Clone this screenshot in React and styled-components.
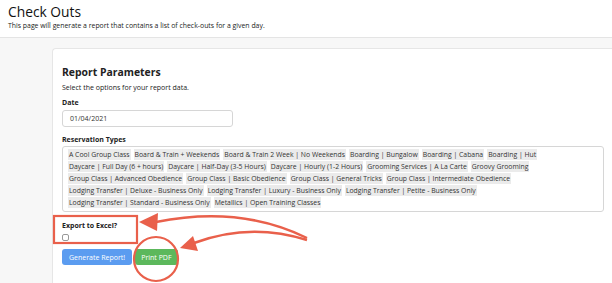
import styled, { createGlobalStyle } from 'styled-components';

const GlobalStyle = createGlobalStyle`
    html, body {
        margin: 0;
        padding: 0;
    }
    body {
        font-family: "Open Sans", "Liberation Sans", sans-serif;
        background: #f7f7f7;
        color: #222;
        width: 612px;
        height: 283px;
        overflow: hidden;
        position: relative;
    }
`;

const Header = styled.header`
    background: #fff;
    height: 38px;
    box-sizing: border-box;
    padding: 3px 8px 0;
    border-bottom: 1px solid #e4e4e4;
`;

const Title = styled.h1`
    margin: 0;
    font-size: 13.8px;
    font-weight: 400;
    line-height: 18px;
    color: #111;
`;

const Subtitle = styled.p`
    margin: 0;
    font-size: 6.9px;
    line-height: 9px;
    color: #222;
`;

const Main = styled.main`
    padding: 10px 0 0 52px;
`;

const Card = styled.section`
    background: #fff;
    border: 1px solid #e6e6e6;
    border-right: none;
    border-radius: 4px 0 0 4px;
    padding: 16px 0 20px 9px;
    width: 600px;
    box-sizing: border-box;
`;

const CardTitle = styled.h2`
    margin: 0;
    font-size: 10.4px;
    font-weight: 700;
    line-height: 14px;
    color: #222;
`;

const Hint = styled.p`
    margin: 4px 0 0;
    font-size: 7px;
    line-height: 10px;
`;

const Label = styled.label`
    display: block;
    font-size: 7px;
    font-weight: 700;
    line-height: 10px;
    margin-top: ${(p) => p.$top || 0}px;
`;

const DateInput = styled.div`
    margin-top: 2px;
    width: 171px;
    height: 17px;
    box-sizing: border-box;
    border: 1px solid #d6d6d6;
    border-radius: 3px;
    padding: 0 7px;
    font-size: 7px;
    line-height: 15px;
    color: #333;
`;

const TagBox = styled.div`
    margin-top: 1px;
    width: 542px;
    height: 66px;
    box-sizing: border-box;
    border: 1px solid #d6d6d6;
    border-radius: 3px;
    padding: 2px 5px;
    display: flex;
    flex-wrap: wrap;
    align-content: flex-start;
    gap: 1px 3px;
`;

const Tag = styled.span`
    background: #ebebeb;
    font-size: 6.85px;
    line-height: 11px;
    padding: 0 1px;
    color: #333;
    white-space: nowrap;
`;

const ExportBlock = styled.div`
    margin-top: 9px;
`;

const Checkbox = styled.span`
    display: block;
    margin-top: 3px;
    width: 5px;
    height: 5px;
    border: 1px solid #999;
    border-radius: 2px;
`;

const Buttons = styled.div`
    display: flex;
    gap: 3px;
    margin-top: 8px;
`;

const Button = styled.button`
    font-family: inherit;
    font-size: 7px;
    height: 16px;
    padding: 0 ${(p) => p.$pad}px;
    border: none;
    border-radius: 3px;
    color: #fff;
    background: ${(p) => p.$bg};
`;

const Overlay = styled.svg`
    position: absolute;
    left: 0;
    top: 0;
    pointer-events: none;
`;

const types = [
    'A Cool Group Class',
    'Board & Train + Weekends',
    'Board & Train 2 Week | No Weekends',
    'Boarding | Bungalow',
    'Boarding | Cabana',
    'Boarding | Hut',
    'Daycare | Full Day (6 + hours)',
    'Daycare | Half-Day (3-5 Hours)',
    'Daycare | Hourly (1-2 Hours)',
    'Grooming Services | A La Carte',
    'Groovy Grooming',
    'Group Class | Advanced Obedience',
    'Group Class | Basic Obedience',
    'Group Class | General Tricks',
    'Group Class | Intermediate Obedience',
    'Lodging Transfer | Deluxe - Business Only',
    'Lodging Transfer | Luxury - Business Only',
    'Lodging Transfer | Petite - Business Only',
    'Lodging Transfer | Standard - Business Only',
    'Metallics | Open Training Classes',
];

export default function App() {
    return (
        <>
            <GlobalStyle />
            <Header>
                <Title>Check Outs</Title>
                <Subtitle>This page will generate a report that contains a list of check-outs for a given day.</Subtitle>
            </Header>
            <Main>
                <Card>
                    <CardTitle>Report Parameters</CardTitle>
                    <Hint>Select the options for your report data.</Hint>
                    <Label $top={5}>Date</Label>
                    <DateInput>01/04/2021</DateInput>
                    <Label $top={8}>Reservation Types</Label>
                    <TagBox>
                        {types.map((t) => (
                            <Tag key={t}>{t}</Tag>
                        ))}
                    </TagBox>
                    <ExportBlock>
                        <Label>Export to Excel?</Label>
                        <Checkbox />
                    </ExportBlock>
                    <Buttons>
                        <Button $bg="#5b9cf0" $pad={7}>Generate Report!</Button>
                        <Button $bg="#5cb85c" $pad={6}>Print PDF</Button>
                    </Buttons>
                </Card>
            </Main>
            <Overlay width="612" height="283" viewBox="0 0 612 283">
                <rect x="54" y="216" width="83" height="27" fill="none" stroke="#e9604b" strokeWidth="2.2" />
                <circle cx="156" cy="259" r="22" fill="none" stroke="#e9604b" strokeWidth="2.2" />
                <path d="M307 238 Q 240 205 156 222" fill="none" stroke="#e9604b" strokeWidth="2.5" />
                <polygon points="139,222 158,213 157,231" fill="#e9604b" />
                <path d="M307 240 Q 250 222 194 243" fill="none" stroke="#e9604b" strokeWidth="2.5" />
                <polygon points="180,248 193,236 198,251" fill="#e9604b" />
            </Overlay>
        </>
    );
}
